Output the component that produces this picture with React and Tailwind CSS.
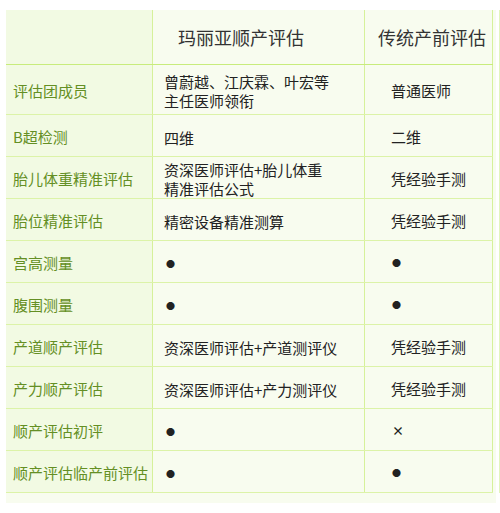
export default function App() {
  const rows = [
    { label: "评估团成员", a: ["曾蔚越、江庆霖、叶宏等", "主任医师领衔"], b: "普通医师", tall: true },
    { label: "B超检测", a: ["四维"], b: "二维" },
    { label: "胎儿体重精准评估", a: ["资深医师评估+胎儿体重", "精准评估公式"], b: "凭经验手测" },
    { label: "胎位精准评估", a: ["精密设备精准测算"], b: "凭经验手测" },
    { label: "宫高测量", a: ["●"], b: "●", dot: true },
    { label: "腹围测量", a: ["●"], b: "●", dot: true },
    { label: "产道顺产评估", a: ["资深医师评估+产道测评仪"], b: "凭经验手测" },
    { label: "产力顺产评估", a: ["资深医师评估+产力测评仪"], b: "凭经验手测" },
    { label: "顺产评估初评", a: ["●"], b: "×", dot: true },
    { label: "顺产评估临产前评估", a: ["●"], b: "●", dot: true },
  ];

  const font = { fontFamily: '"Noto Sans CJK SC", "Noto Sans", sans-serif' };

  return (
    <div className="flex w-[500px] h-[513px] bg-white pt-[10px]" style={font}>
      {/* table */}
      <div className="ml-[6px] w-[490px] h-[493px] bg-[#f8fcef] pr-[3px]">
        {/* header */}
        <div className="flex h-[55px] border-b border-[#c8ec7c]">
          <div className="w-[147px] bg-[#f2fae3] border-r border-[#d6f19a]" />
          <div className="w-[212px] flex items-center pl-[25px] border-r border-[#d6f19a] text-[18px] text-[#333]">
            玛丽亚顺产评估
          </div>
          <div className="w-[128px] flex items-center pl-[13px] border-r border-[#d6f19a] text-[18px] text-[#333]">
            传统产前评估
          </div>
        </div>

        {rows.map((r) => (
          <div
            key={r.label}
            className={`flex border-b border-[#dcf3a8] ${r.tall ? "h-[50px]" : "h-[42px]"}`}
          >
            <div className="w-[147px] bg-[#f2fae3] border-r border-[#d6f19a] flex items-center pt-[3px] pl-[7px] text-[15px] text-[#648f24] whitespace-nowrap">
              {r.label}
            </div>
            <div className="w-[212px] border-r border-[#d6f19a] flex flex-col justify-center pt-[3px] pl-[11px] text-[15px] leading-[19px] text-[#222]">
              {r.a.map((t) =>
                r.dot ? (
                  <span key={t} className="text-[9px] leading-[19px] pl-[2px]">{t}</span>
                ) : (
                  <span key={t} className="whitespace-nowrap">{t}</span>
                )
              )}
            </div>
            <div className="w-[128px] border-r border-[#d6f19a] flex items-center pt-[3px] pl-[26px] text-[15px] text-[#222]">
              {r.dot ? (
                <span className={r.b === "×" ? "text-[12px] font-bold pl-[1px]" : "text-[9px] pl-[1px]"}>{r.b}</span>
              ) : (
                r.b
              )}
            </div>
          </div>
        ))}
      </div>
      <div className="ml-[3px] w-px h-[483px] bg-[#e3f5bd]" />
    </div>
  );
}
